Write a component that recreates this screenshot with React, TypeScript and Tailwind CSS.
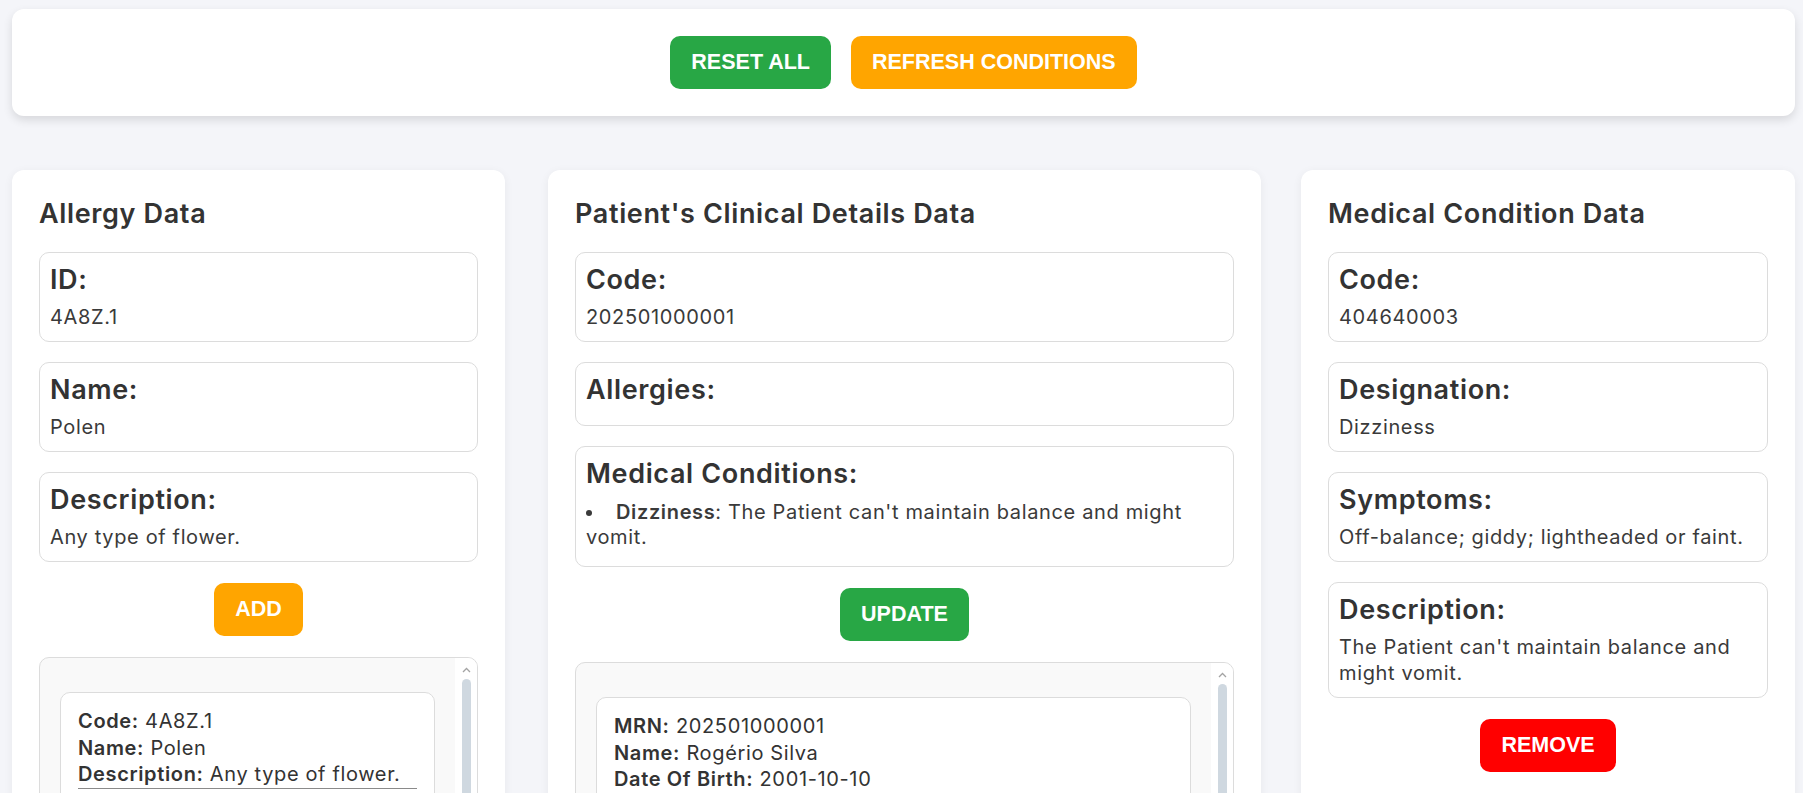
import React from 'react';

interface Field {
  label: string;
  value?: string;
}

interface ListEntry {
  label: string;
  value: string;
}

const Chevron: React.FC = () => (
  <svg width="9" height="6" viewBox="0 0 9 6" className="mt-[9px]">
    <polyline points="1,5 4.5,1.5 8,5" fill="none" stroke="#a3a3a3" strokeWidth="1.3" />
  </svg>
);

const ActionButton: React.FC<{ label: string; color: string }> = ({ label, color }) => (
  <button
    className={`h-[53px] px-[21px] rounded-[10px] text-white font-bold tracking-normal text-[21.5px] font-['Liberation_Sans',Arial,sans-serif] ${color}`}
  >
    {label}
  </button>
);

const FieldBox: React.FC<{ field: Field; children?: React.ReactNode }> = ({ field, children }) => (
  <div className="border border-[#dcdcdc] rounded-[10px] bg-white px-[10px] pt-[11px] pb-[11px]">
    <div className="text-[27px] leading-[31px] font-semibold text-[#333] mb-[9px]">{field.label}</div>
    {field.value && <div className="text-[20px] leading-[26px] text-[#3a3a3a]">{field.value}</div>}
    {children}
  </div>
);

const ScrollList: React.FC<{ entries: ListEntry[][] }> = ({ entries }) => (
  <div className="border border-[#dcdcdc] rounded-[10px] bg-[#f9f9f9] flex overflow-hidden h-[400px]">
    <div className="flex-1 pl-[20px] pr-[20px] pt-[34px] flex flex-col gap-[16px]">
      {entries.map((item, i) => (
        <div key={i} className="bg-white border border-[#dcdcdc] rounded-[10px] px-[17px] pt-[15px] pb-[15px]">
          <div className="border-b border-[#8a8a8a] text-[20px] leading-[26.5px] text-[#333]">
            {item.map((e) => (
              <div key={e.label}>
                <span className="font-semibold">{e.label}:</span> {e.value}
              </div>
            ))}
          </div>
        </div>
      ))}
    </div>
    <div className="w-[22px] bg-white flex flex-col items-center">
      <Chevron />
      <div className="mt-[6px] w-[9px] h-[300px] rounded-full bg-[#cfd8e0]" />
    </div>
  </div>
);

const Panel: React.FC<{ title: string; className?: string; children: React.ReactNode }> = ({
  title,
  className = '',
  children
}) => (
  <div
    className={`bg-white rounded-[12px] shadow-[0_2px_10px_rgba(0,0,0,0.06)] px-[27px] pt-[28px] pb-[27px] ${className}`}
  >
    <h2 className="text-[27px] leading-[32px] font-semibold text-[#333] mb-[22px]">{title}</h2>
    {children}
  </div>
);

export default function App() {
  const allergyFields: Field[] = [
    { label: 'ID:', value: '4A8Z.1' },
    { label: 'Name:', value: 'Polen' },
    { label: 'Description:', value: 'Any type of flower.' }
  ];

  const conditionFields: Field[] = [
    { label: 'Code:', value: '404640003' },
    { label: 'Designation:', value: 'Dizziness' },
    { label: 'Symptoms:', value: 'Off-balance; giddy; lightheaded or faint.' },
    { label: 'Description:', value: "The Patient can't maintain balance and might vomit." }
  ];

  return (
    <div className="h-screen overflow-hidden bg-[#f4f5f9] font-['Inter','Noto_Sans',sans-serif] tracking-[0.04em] pt-[9px] pl-[12px] pr-[8px]">
      {/* Toolbar */}
      <div className="bg-white rounded-[12px] shadow-[0_4px_10px_rgba(0,0,0,0.12)] py-[27px] flex justify-center gap-[20px]">
        <ActionButton label="RESET ALL" color="bg-[#28a745]" />
        <ActionButton label="REFRESH CONDITIONS" color="bg-[#ffa500]" />
      </div>

      <div className="flex items-start mt-[54px]">
        {/* Allergy */}
        <Panel title="Allergy Data" className="w-[493px]">
          <div className="flex flex-col gap-[20px]">
            {allergyFields.map((f) => (
              <FieldBox key={f.label} field={f} />
            ))}
          </div>
          <div className="flex justify-center my-[21px]">
            <ActionButton label="ADD" color="bg-[#ffa500]" />
          </div>
          <ScrollList
            entries={[
              [
                { label: 'Code', value: '4A8Z.1' },
                { label: 'Name', value: 'Polen' },
                { label: 'Description', value: 'Any type of flower.' }
              ],
              [
                { label: 'Code', value: 'BZ05.0' },
                { label: 'Name', value: 'Penicillin' },
                { label: 'Description', value: 'Antibiotic allergy.' }
              ]
            ]}
          />
        </Panel>

        {/* Clinical details */}
        <Panel title="Patient's Clinical Details Data" className="w-[713px] ml-[43px]">
          <div className="flex flex-col gap-[20px]">
            <FieldBox field={{ label: 'Code:', value: '202501000001' }} />
            <FieldBox field={{ label: 'Allergies:' }} />
            <FieldBox field={{ label: 'Medical Conditions:' }}>
              <ul className="list-disc list-inside text-[20px] leading-[25px] text-[#3a3a3a] pt-[2px] pb-[5px]">
                <li>
                  <span className="font-semibold ml-[3px]">Dizziness</span>: The Patient can't maintain balance and
                  might vomit.
                </li>
              </ul>
            </FieldBox>
          </div>
          <div className="flex justify-center my-[21px]">
            <ActionButton label="UPDATE" color="bg-[#28a745]" />
          </div>
          <ScrollList
            entries={[
              [
                { label: 'MRN', value: '202501000001' },
                { label: 'Name', value: 'Rogério Silva' },
                { label: 'Date Of Birth', value: '2001-10-10' },
                { label: 'Gender', value: 'Male' }
              ]
            ]}
          />
        </Panel>

        {/* Medical condition */}
        <Panel title="Medical Condition Data" className="w-[494px] ml-[40px]">
          <div className="flex flex-col gap-[20px]">
            {conditionFields.map((f) => (
              <FieldBox key={f.label} field={f} />
            ))}
          </div>
          <div className="flex justify-center my-[21px]">
            <ActionButton label="REMOVE" color="bg-[#ff0000]" />
          </div>
          <ScrollList
            entries={[
              [
                { label: 'Code', value: '404640003' },
                { label: 'Designation', value: 'Dizziness' }
              ]
            ]}
          />
        </Panel>
      </div>
    </div>
  );
}
